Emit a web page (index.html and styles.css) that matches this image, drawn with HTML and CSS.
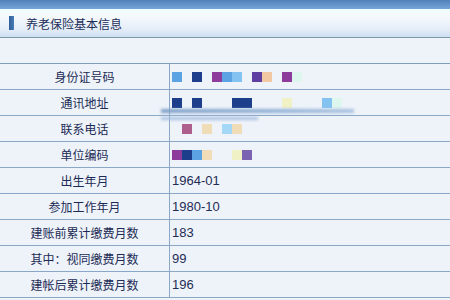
FILE: index.html
```html
<!DOCTYPE html>
<html>
<head>
	<meta charset="utf-8">
	<title>养老保险基本信息</title>
	<link rel="stylesheet" href="styles.css">
</head>
<body>
	<div class="topbar"></div>
	<div class="panel-title">
		<span class="marker"></span>
		<span class="title-text">养老保险基本信息</span>
	</div>
	<div class="spacer"></div>
	<table class="info">
		<tr>
			<td class="label">身份证号码</td>
			<td class="value">
				<span class="mosaic"><i class="sky"></i><i></i><i class="navy"></i><i></i><i class="purple"></i><i class="sky"></i><i class="pale"></i><i></i><i class="violet"></i><i class="peach"></i><i></i><i class="purple"></i><i class="mint"></i></span>
			</td>
		</tr>
		<tr>
			<td class="label">通讯地址</td>
			<td class="value smudged">
				<span class="mosaic"><i class="navy"></i><i></i><i class="navy"></i><i></i><i></i><i></i><i class="navy"></i><i class="navy"></i><i></i><i></i><i></i><i class="cream"></i><i></i><i></i><i></i><i class="pale"></i><i class="mint"></i></span>
				<div class="smudge"></div>
				<div class="smudge short"></div>
			</td>
		</tr>
		<tr>
			<td class="label">联系电话</td>
			<td class="value">
				<span class="mosaic"><i></i><i class="mauve"></i><i></i><i class="sand"></i><i></i><i class="ice"></i><i class="sand"></i></span>
			</td>
		</tr>
		<tr>
			<td class="label">单位编码</td>
			<td class="value">
				<span class="mosaic"><i class="purple"></i><i class="navy"></i><i class="sky"></i><i class="sand"></i><i></i><i></i><i class="cream"></i><i class="violet fade"></i></span>
			</td>
		</tr>
		<tr>
			<td class="label">出生年月</td>
			<td class="value">1964-01</td>
		</tr>
		<tr>
			<td class="label">参加工作年月</td>
			<td class="value">1980-10</td>
		</tr>
		<tr>
			<td class="label">建账前累计缴费月数</td>
			<td class="value">183</td>
		</tr>
		<tr>
			<td class="label">其中：视同缴费月数</td>
			<td class="value">99</td>
		</tr>
		<tr>
			<td class="label">建帐后累计缴费月数</td>
			<td class="value">196</td>
		</tr>
	</table>
</body>
</html>
```

FILE: styles.css
```css
body {
	margin: 0;
	background-color: #eef3f9;
	font-family: "Liberation Sans", "Noto Sans CJK SC", sans-serif;
	font-size: 12px;
	color: #1c2b55;
}
.topbar {
	height: 9px;
	background: linear-gradient(#4f80b8, #77a5da);
}
.panel-title {
	height: 28px;
	display: flex;
	align-items: center;
	background: linear-gradient(#effcff 0, #f6f9fc 25%, #e6eef8 70%, #cddff2 100%);
	border-bottom: 1px solid #7e98a8;
}
.marker {
	width: 5px;
	height: 14px;
	margin-left: 9px;
	margin-right: 12px;
	background: linear-gradient(90deg, #2f5f99, #4a7cb8);
}
.title-text {
	font-size: 12px;
	color: #1c2f5a;
}
.spacer {
	height: 25px;
	border-bottom: 1px solid #7e9db8;
}
.info {
	width: 100%;
	border-collapse: collapse;
}
.info td {
	height: 25px;
	padding: 0;
	border-bottom: 1px solid #8aa8c6;
}
.label {
	width: 169px;
	text-align: center;
	border-right: 1px solid #8aa8c6;
}
.value {
	padding-left: 2px !important;
	font-size: 13px;
	color: #1f2c55;
}
.mosaic {
	display: flex;
	height: 10px;
}
.mosaic i {
	width: 10px;
	height: 10px;
}
.mosaic .navy { background: #1d3e8a; }
.mosaic .sky { background: #5ba3e2; }
.mosaic .pale { background: #84c2f2; }
.mosaic .purple { background: #8d3c9c; }
.mosaic .violet { background: #5e3ea0; }
.mosaic .peach { background: #f1c8a2; }
.mosaic .mint { background: #ddf6ee; }
.mosaic .cream { background: #f1f1c6; }
.mosaic .mauve { background: #ad5e8c; }
.mosaic .sand { background: #f0dcb6; }
.mosaic .ice { background: #a4d8f6; }
.mosaic .fade { opacity: 0.8; }

/* blurred streak lying across the address row */
.smudged {
	position: relative;
}
.smudge {
	position: absolute;
	left: -9px;
	top: 19px;
	width: 193px;
	height: 4px;
	background: linear-gradient(90deg, #7d9fc8, #93b2d6 60%, #a9c2e0);
	filter: blur(1.5px);
}
.smudge.short {
	top: 27px;
	height: 3px;
	width: 97px;
	background: #a6c0de;
}
```
